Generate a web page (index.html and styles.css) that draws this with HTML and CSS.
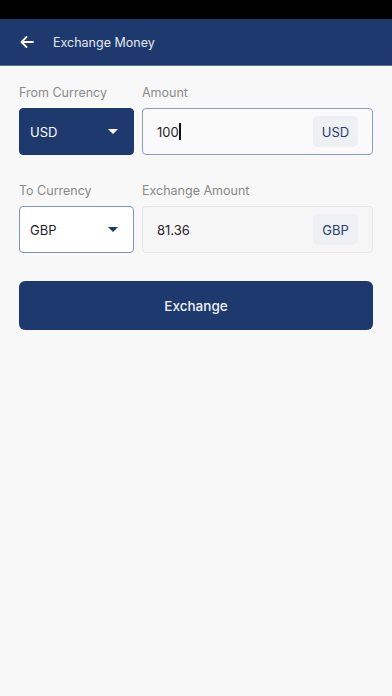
FILE: index.html
```html
<!DOCTYPE html>
<html>
<head>
<meta charset="utf-8">
<link rel="stylesheet" href="styles.css">
</head>
<body>
<div class="status"></div>
<header class="appbar">
  <svg class="back" width="14" height="12" viewBox="0 0 14 12"><path d="M13 6H1.5M6.5 1L1.5 6l5 5" fill="none" stroke="#fff" stroke-width="1.8" stroke-linecap="round" stroke-linejoin="round"/></svg>
  <span class="title">Exchange Money</span>
</header>
<main class="content">
  <div class="row">
    <div class="field">
      <label class="label">From Currency</label>
      <div class="select select-active"><span>USD</span><span class="caret caret-white"></span></div>
    </div>
    <div class="field">
      <label class="label">Amount</label>
      <div class="input input-focus"><span class="value">100<span class="cursor"></span></span><span class="badge">USD</span></div>
    </div>
  </div>
  <div class="row">
    <div class="field">
      <label class="label">To Currency</label>
      <div class="select"><span>GBP</span><span class="caret caret-blue"></span></div>
    </div>
    <div class="field">
      <label class="label">Exchange Amount</label>
      <div class="input input-disabled"><span class="value">81.36</span><span class="badge">GBP</span></div>
    </div>
  </div>
  <button class="btn">Exchange</button>
</main>
</body>
</html>
```
FILE: styles.css
```css
* { box-sizing: border-box; }
html, body { margin: 0; padding: 0; }
body {
  width: 392px;
  height: 696px;
  background: #f8f8f8;
  font-family: Inter, "Noto Sans", sans-serif;
  overflow: hidden;
}
.status { height: 19px; background: #000; }
.appbar {
  height: 47px;
  background: #1d396d;
  display: flex;
  align-items: center;
  padding-left: 20px;
  border-bottom: 1px solid #5a6e95;
}
.back { display: block; margin-top: -1px; }
.title {
  margin-left: 19px;
  color: #e4e8f0;
  font-size: 12.5px;
}
.content { padding: 19px 19px 0; }
.row {
  display: grid;
  grid-template-columns: 115px 1fr;
  gap: 8px;
  margin-bottom: 28px;
}
.field { display: flex; flex-direction: column; }
.label {
  font-size: 12.5px;
  line-height: 16px;
  color: #8a8a8a;
  margin-bottom: 7px;
}
.select {
  height: 47px;
  border-radius: 4px;
  border: 1px solid #7f93bb;
  background: #fff;
  display: flex;
  align-items: center;
  justify-content: space-between;
  padding: 0 15px 0 10px;
  font-size: 13px;
  color: #1f1f1f;
}
.select-active {
  background: #1d396d;
  border-color: #1d396d;
  color: #fff;
}
.caret {
  width: 0; height: 0;
  border-left: 5px solid transparent;
  border-right: 5px solid transparent;
  border-top: 5px solid #fff;
}
.caret-blue { border-top-color: #1d396d; }
.input {
  height: 47px;
  border-radius: 4px;
  border: 1px solid #8d9dbd;
  background: #fafafa;
  display: flex;
  align-items: center;
  justify-content: space-between;
  padding: 0 14px 0 14px;
  font-size: 13px;
  color: #1f1f1f;
}
.input-disabled {
  border-color: #e6e6e6;
  background: #f6f6f6;
}
.value { display: flex; align-items: center; }
.cursor {
  display: inline-block;
  width: 2px;
  height: 17px;
  background: #111;
}
.badge {
  width: 45px;
  height: 31px;
  border-radius: 5px;
  background: #eef0f4;
  color: #28406f;
  font-size: 13px;
  display: flex;
  align-items: center;
  justify-content: center;
}
.btn {
  display: block;
  width: 100%;
  height: 49px;
  margin-top: 1px;
  border: none;
  border-radius: 6px;
  background: #1d396d;
  color: #eef1f6;
  font-family: Inter, "Noto Sans", sans-serif;
  font-size: 13.5px;
  font-weight: 500;
}
```
